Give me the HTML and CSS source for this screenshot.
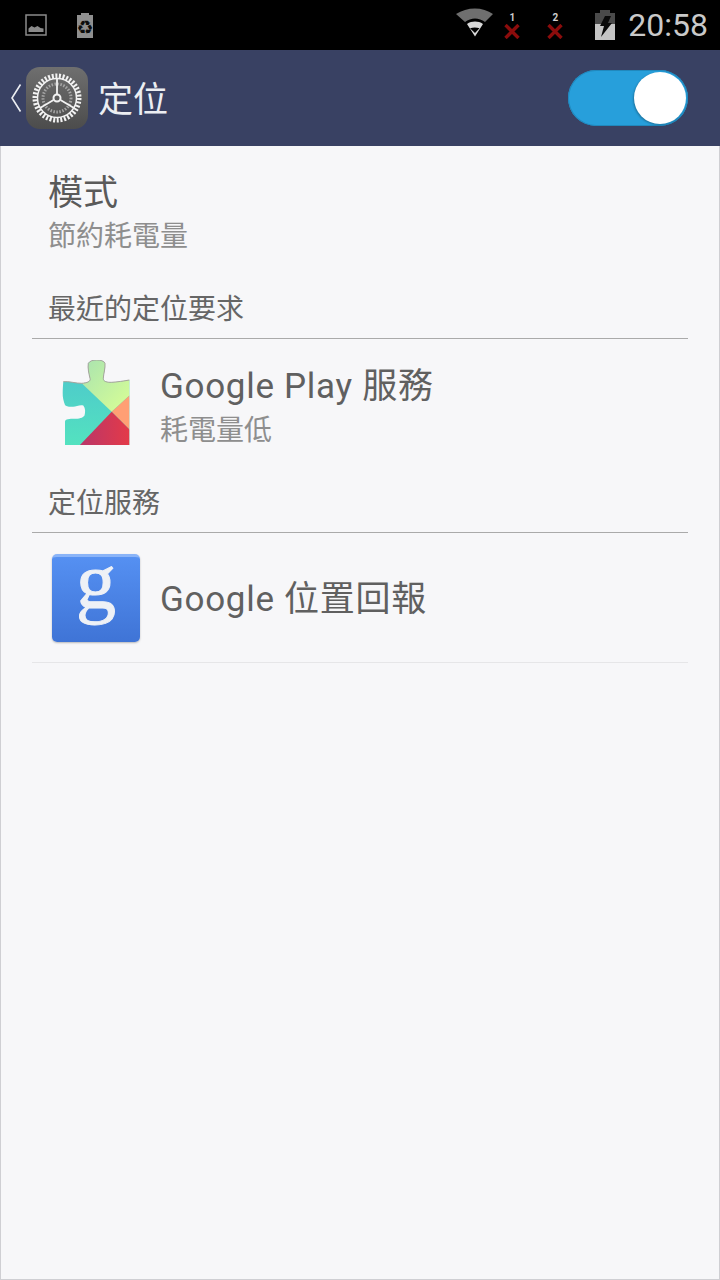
FILE: index.html
```html
<!DOCTYPE html>
<html lang="zh-Hant">
<head>
    <meta charset="UTF-8">
    <meta name="viewport" content="width=device-width, initial-scale=1.0">
    <title>定位</title>
    <link rel="stylesheet" href="styles.css">
</head>
<body>
    <div class="screen">
        <!-- status bar -->
        <div class="status-bar">
            <div class="status-left">
                <svg class="icon-picture" width="22" height="22" viewBox="0 0 22 22">
                    <rect x="1" y="1" width="20" height="20" fill="none" stroke="#8a8a8a" stroke-width="1.500"/>
                    <path d="M3.500 18v-3.500l3-2.500 3 1.500 3-1.500 3 2 3 .5V18z" fill="#8a8a8a"/>
                </svg>
                <svg class="icon-recycle" width="18" height="25" viewBox="0 0 18 25">
                    <path d="M5 0h8v2h4v23H1V2h4z" fill="#8f8f8f"/>
                    <text x="9" y="21" text-anchor="middle" class="recycle-glyph">♻</text>
                </svg>
            </div>
            <div class="status-right">
                <svg class="icon-wifi" width="38" height="29" viewBox="0 0 38 29">
                    <path d="M0 6C11-1.500 27-1.500 37 6l-8 8c-6-4.700-14-4.700-20 0z" fill="#6f6f6f"/>
                    <path d="M11 16c5-3.200 11-3.200 16 0l-8 12.500zM14 20.300L19 25l4.500-4.700c-3-1.200-6.500-1.200-9.500 0z" fill="#d8d8d8" fill-rule="evenodd"/>
                </svg>
                <div class="sim">
                    <span class="sim-num">1</span>
                    <svg width="16" height="15" viewBox="0 0 16 15"><path d="M1.500 1l13 13M14.500 1l-13 13" stroke="#8b0c0c" stroke-width="3.400"/></svg>
                </div>
                <div class="sim">
                    <span class="sim-num">2</span>
                    <svg width="16" height="15" viewBox="0 0 16 15"><path d="M1.500 1l13 13M14.500 1l-13 13" stroke="#8b0c0c" stroke-width="3.400"/></svg>
                </div>
                <svg class="icon-battery" width="22" height="30" viewBox="0 0 22 30">
                    <path d="M6 0h10v3h5v27H1V3h5z" fill="#c4c4c4"/>
                    <path d="M6 0h10v3h5v11H1V3h5z" fill="#4a4a4a"/>
                    <path d="M11 6h6l-3 7h4L7 27l3-11H6z" fill="#0a0a0a"/>
                </svg>
                <span class="clock">20:58</span>
            </div>
        </div>

        <!-- action bar -->
        <div class="action-bar">
            <svg class="back-arrow" width="12" height="30" viewBox="0 0 12 30">
                <path d="M10.500 1.500L2 15l8.500 13.500" fill="none" stroke="#eceef2" stroke-width="1.600"/>
            </svg>
            <div class="settings-icon">
                <svg width="62" height="62" viewBox="0 0 62 62">
                    <circle cx="31" cy="31" r="22" fill="none" stroke="#f2f2f2" stroke-width="5" stroke-dasharray="2 1.620"/>
                    <circle cx="31" cy="31" r="19.500" fill="none" stroke="#f2f2f2" stroke-width="1.500"/>
                    <circle cx="31" cy="31" r="14" fill="none" stroke="#a5a5a5" stroke-width="3" stroke-dasharray="1.500 1.500"/>
                    <path d="M31 27V11M27.500 33L14 41M34.500 33L48 41" stroke="#f2f2f2" stroke-width="1.800"/>
                    <circle cx="31" cy="31" r="3.500" fill="none" stroke="#f2f2f2" stroke-width="2"/>
                </svg>
            </div>
            <span class="action-title">定位</span>
            <div class="toggle"><span class="toggle-knob"></span></div>
        </div>

        <!-- content -->
        <div class="content">
            <div class="mode-row">
                <div class="mode-title">模式</div>
                <div class="mode-sub">節約耗電量</div>
            </div>

            <div class="section-title recent">最近的定位要求</div>
            <div class="app-row play-row">
                <svg class="app-icon" width="88" height="88" viewBox="0 0 88 88">
                    <defs>
                        <clipPath id="puzzle">
                            <path d="M11.300 21.700C17 21 24 23.500 29.700 23.300 35 23 39 21.500 38 18.300 37 14 35.500 8 36.300 3.300 38 .8 41 0 44.700 0 48.500 0 52 .8 53 3.300 53.500 8 51.500 14 51.300 18.300 51 21.500 55 22.500 59.700 22.300 65 22 72 21 77.300 20V85H13V61.700C13 59 18 58.800 22 58.800 27 58.800 31 58 32.500 55.500 33.500 52 33.500 48 31.300 45.500 28 44.300 24 46.700 21.300 46.700 17 47 14 46.500 13 45 11.500 41 10.500 37 10.700 33.300 10.700 29 11 25 11.300 21.700z"/>
                        </clipPath>
                        <linearGradient id="g-top" x1="0" y1="0" x2="1" y2="1">
                            <stop offset="0" stop-color="#a9e3b0"/>
                            <stop offset="1" stop-color="#d9ff94"/>
                        </linearGradient>
                        <linearGradient id="g-left" x1="0" y1="0" x2="0" y2="1">
                            <stop offset="0" stop-color="#4cc5cd"/>
                            <stop offset="1" stop-color="#54e3bf"/>
                        </linearGradient>
                        <linearGradient id="g-bottom" x1="0" y1="0" x2="1" y2="0">
                            <stop offset="0" stop-color="#b8366a"/>
                            <stop offset="1" stop-color="#e43a48"/>
                        </linearGradient>
                    </defs>
                    <g clip-path="url(#puzzle)">
                        <rect width="88" height="88" fill="url(#g-left)"/>
                        <path d="M29.700 0V23.300L59.700 51.700 78 35V0z" fill="url(#g-top)"/>
                        <path d="M59.700 51.700L78 35V70z" fill="#ff9f74"/>
                        <path d="M59.700 51.700L78 70V86H27z" fill="url(#g-bottom)"/>
                    </g>
                    <path d="M11.300 21.700C17 21 24 23.500 29.700 23.300 35 23 39 21.500 38 18.300 37 14 35.500 8 36.300 3.300 38 .8 41 0 44.700 0 48.500 0 52 .8 53 3.300 53.500 8 51.500 14 51.300 18.300 51 21.500 55 22.500 59.700 22.300 65 22 72 21 77.300 20" fill="none" stroke="#a8a49c" stroke-width="1"/>
                </svg>
                <div class="app-text">
                    <div class="app-name">Google Play 服務</div>
                    <div class="app-sub">耗電量低</div>
                </div>
            </div>

            <div class="section-title">定位服務</div>
            <div class="app-row report-row">
                <div class="g-icon"><span>g</span></div>
                <div class="app-name">Google 位置回報</div>
            </div>
        </div>
    </div>
</body>
</html>
```

FILE: styles.css
```css
* {
    margin: 0;
    padding: 0;
    box-sizing: border-box;
}

body {
    font-family: Roboto, "Noto Sans CJK TC", sans-serif;
    background: #f7f7f9;
}

.screen {
    width: 720px;
    height: 1280px;
    display: flex;
    flex-direction: column;
    overflow: hidden;
}

/* status bar */
.status-bar {
    height: 50px;
    background: #000;
    display: flex;
    justify-content: space-between;
    align-items: center;
}

.status-left {
    display: flex;
    align-items: center;
    gap: 29px;
    padding-left: 25px;
}

.recycle-glyph {
    font-family: "DejaVu Sans", sans-serif;
    font-size: 19px;
    fill: #0c0c0c;
}

.status-right {
    display: flex;
    align-items: center;
    padding-right: 12px;
}

.icon-wifi {
    margin-right: 10px;
    margin-top: -6px;
}

.sim {
    width: 43px;
    display: flex;
    flex-direction: column;
    align-items: flex-start;
}

.sim-num {
    width: 16px;
    text-align: center;
    font-size: 10px;
    line-height: 12px;
    font-weight: 700;
    color: #ccc;
}

.icon-battery {
    margin-left: 4px;
    margin-right: 12px;
}

.clock {
    font-size: 32px;
    line-height: 40px;
    color: #c9c9c9;
}

/* action bar */
.action-bar {
    height: 96px;
    background: #394163;
    display: flex;
    align-items: center;
    padding-left: 10px;
}

.back-arrow {
    margin-right: 4px;
}

.settings-icon {
    width: 62px;
    height: 62px;
    border-radius: 14px;
    background: linear-gradient(#6f6f6f, #4c4c4c);
}

.action-title {
    font-size: 35px;
    color: #eceef2;
    margin-left: 10px;
    margin-top: -4px;
}

.toggle {
    width: 120px;
    height: 56px;
    margin-left: auto;
    margin-right: 32px;
    border-radius: 28px;
    background: #279fdb;
    box-shadow: inset 0 0 0 1px #2088bd;
    position: relative;
}

.toggle-knob {
    position: absolute;
    right: 2px;
    top: 2px;
    width: 52px;
    height: 52px;
    border-radius: 50%;
    background: #fff;
    box-shadow: -1px 1px 2px rgba(0, 0, 0, 0.25);
}

/* list */
.content {
    flex: 1;
    padding: 0 31px;
    background: #f7f7f9;
    border-left: 1px solid #cfcfd3;
    border-right: 1px solid #cfcfd3;
    border-bottom: 1px solid #cfcfd3;
}

.mode-row {
    padding: 25px 0 0 16px;
}

.mode-title {
    font-size: 35px;
    line-height: 46px;
    color: #5a5a5a;
}

.mode-sub {
    font-size: 28px;
    line-height: 40px;
    color: #8e8e8e;
}

.section-title {
    font-size: 28px;
    line-height: 42px;
    padding-left: 16px;
    color: #666;
    border-bottom: 1px solid #aaa;
    height: 50px;
}

.recent {
    margin-top: 32px;
}

.app-row {
    display: flex;
    align-items: center;
    padding-left: 20px;
}

.play-row {
    height: 144px;
    padding-bottom: 14px;
}

.report-row {
    height: 130px;
    border-bottom: 1px solid #e6e6e8;
}

.report-row .app-name {
    margin-top: 4px;
}

.app-icon {
    flex-shrink: 0;
}

.app-text {
    padding-top: 10px;
}

.app-name {
    margin-left: 20px;
    font-size: 35px;
    line-height: 44px;
    color: #606060;
    letter-spacing: 0.7px;
}

.app-sub {
    margin-left: 20px;
    font-size: 28px;
    line-height: 44px;
    color: #8e8e8e;
}

.g-icon {
    width: 88px;
    height: 88px;
    flex-shrink: 0;
    border-radius: 5px;
    background: linear-gradient(#5590f2, #3f74d6);
    border-top: 3px solid #8ab4f8;
    display: flex;
    align-items: center;
    justify-content: center;
    box-shadow: 0 1px 2px rgba(0, 0, 0, 0.25);
}

.g-icon span {
    font-family: "Liberation Serif", serif;
    font-size: 80px;
    line-height: 88px;
    color: #eef1f6;
    -webkit-text-stroke: 1px #eef1f6;
    margin-top: -37px;
}
```
